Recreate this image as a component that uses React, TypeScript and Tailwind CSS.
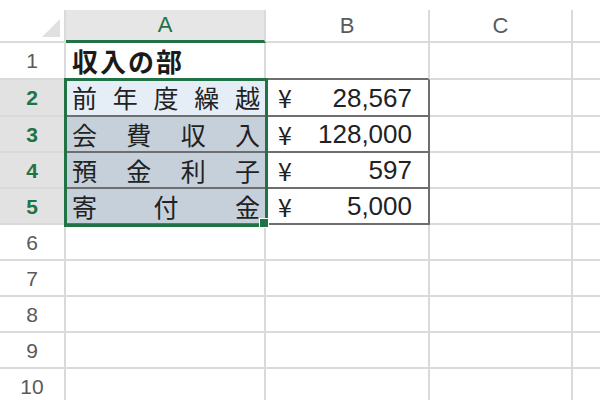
import React from "react";

type Row = { label: string; spread: string[]; amount: string };

const rows: Row[] = [
  { label: "前年度繰越", spread: ["前", "年", "度", "繰", "越"], amount: "28,567" },
  { label: "会費収入", spread: ["会", "費", "収", "入"], amount: "128,000" },
  { label: "預金利子", spread: ["預", "金", "利", "子"], amount: "597" },
  { label: "寄付金", spread: ["寄", "付", "金"], amount: "5,000" },
];

const jp = "font-['Noto_Sans_CJK_JP',sans-serif]";

function RowHeader({ n, active }: { n: number; active: boolean }) {
  return (
    <div
      className={`flex items-center justify-center leading-none border-r-2 border-b-2 border-[#dadada] font-['Liberation_Sans',sans-serif] text-[21px] ${
        active ? "bg-[#e2e2e2] text-[#217346] font-bold" : "bg-white text-[#5a5a5a]"
      }`}
    >
      {n}
    </div>
  );
}

export default function App() {
  return (
    <div className="relative w-[600px] h-[400px] overflow-hidden bg-white">
      <div className="h-[10px]" />
      <div className="grid grid-cols-[66px_200px_164px_143px_1fr] grid-rows-[33px_37px_37px_36px_36px_36px_36px_36px_36px_36px_36px]">
        {/* column headers */}
        <div className="flex items-end justify-end pr-[4px] pb-[4px] border-r-2 border-b-2 border-[#dadada]">
          <div className="w-0 h-0 border-l-[18px] border-l-transparent border-b-[18px] border-b-[#e0e0e0]" />
        </div>
        <div className="flex items-center justify-center leading-none bg-[#e6e6e6] border-r-2 border-[#dadada] border-b-[3px] border-b-[#217346] text-[#217346] font-['Liberation_Sans',sans-serif] text-[22px]">
          A
        </div>
        <div className="flex items-center justify-center leading-none border-r-2 border-b-2 border-[#dadada] text-[#5a5a5a] font-['Liberation_Sans',sans-serif] text-[22px]">
          B
        </div>
        <div className="flex items-center justify-center leading-none border-r-2 border-b-2 border-[#dadada] text-[#5a5a5a] font-['Liberation_Sans',sans-serif] text-[22px]">
          C
        </div>
        <div className="border-b-2 border-[#dadada]" />

        {/* row 1 */}
        <RowHeader n={1} active={false} />
        <div
          className={`flex items-center pl-[6px] leading-none border-r-2 border-[#dadada] border-b-2 border-b-[#6e6e6e] ${jp} text-[26px] font-bold text-[#1a1a1a] tracking-[2px]`}
        >
          収入の部
        </div>
        <div className="border-r-2 border-[#dadada] border-b-2 border-b-[#6e6e6e]" />
        <div className="border-r-2 border-b-2 border-[#dadada]" />
        <div className="border-b-2 border-[#dadada]" />

        {/* data rows */}
        {rows.map((r, i) => (
          <React.Fragment key={r.label}>
            <RowHeader n={i + 2} active />
            <div
              className={`flex items-center justify-between px-[6px] leading-none border-b-2 border-[#6e6e6e] ${jp} text-[25px] text-[#222] ${
                i === 0 ? "bg-[#e5edf6]" : "bg-[#c6d0da]"
              }`}
            >
              {r.spread.map((c, j) => (
                <span key={j}>{c}</span>
              ))}
            </div>
            <div className="flex items-center justify-between pl-[10px] pr-[16px] leading-none border-l-2 border-r-2 border-b-2 border-[#6e6e6e] font-['Liberation_Sans',sans-serif] text-[26px] text-[#222]">
              <span className={`${jp} text-[25px]`}>¥</span>
              <span>{r.amount}</span>
            </div>
            <div className="border-r-2 border-b-2 border-[#dadada]" />
            <div className="border-b-2 border-[#dadada]" />
          </React.Fragment>
        ))}

        {/* empty rows */}
        {[6, 7, 8, 9, 10].map((n) => (
          <React.Fragment key={n}>
            <RowHeader n={n} active={false} />
            <div className="border-r-2 border-b-2 border-[#dadada]" />
            <div className="border-r-2 border-b-2 border-[#dadada]" />
            <div className="border-r-2 border-b-2 border-[#dadada]" />
            <div className="border-b-2 border-[#dadada]" />
          </React.Fragment>
        ))}
      </div>

      {/* selection outline + fill handle */}
      <div className="absolute left-[64px] top-[78px] w-[204px] h-[149px] border-[3px] border-[#217346] pointer-events-none" />
      <div className="absolute left-[259px] top-[218px] w-[10px] h-[10px] bg-[#217346] border border-white" />
    </div>
  );
}
